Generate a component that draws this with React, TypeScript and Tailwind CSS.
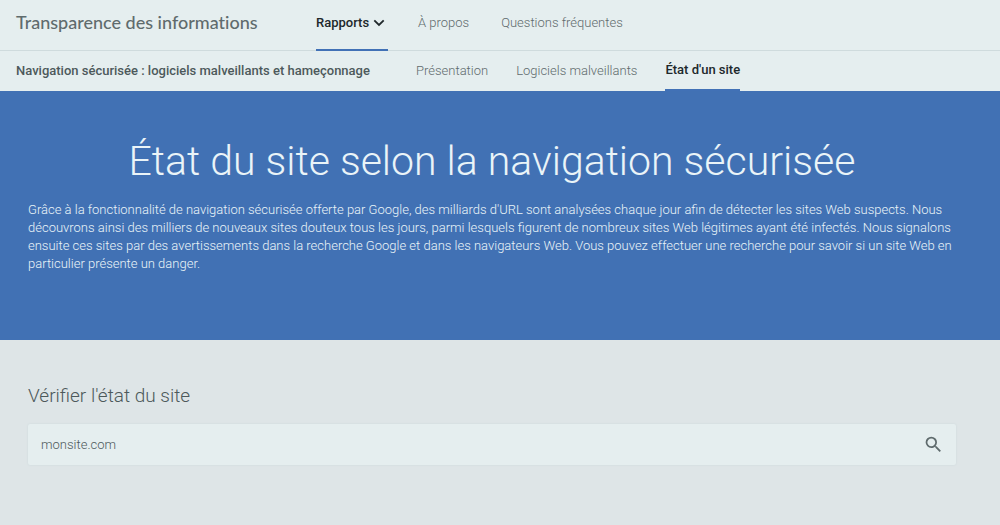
import React, { useState } from "react";
import { MdSearch } from "react-icons/md";

type NavLinkProps = {
  title: string;
  active?: boolean;
};

const NavLink: React.FC<NavLinkProps> = ({ title, active }) => {
  return (
    <a
      href="#"
      className={
        active
          ? "flex h-full items-center border-b-2 border-[#4171b6] font-medium text-[#20282b]"
          : "flex h-full items-center font-light text-[#5f6b6d]"
      }
    >
      {title}
    </a>
  );
};

const Header = () => {
  return (
    <header className="bg-[#e5eeef] text-[13px] whitespace-nowrap">
      <div className="flex h-[51px] border-b border-[#cfdbdd] pl-4">
        <a
          href="#"
          className="w-[300px] self-center pb-1.5 font-['Lato'] text-lg font-medium text-[#5f6b6d] [font-variant-ligatures:none]"
        >
          Transparence des informations
        </a>
        <nav className="-mb-px flex gap-[30px]">
          <button
            type="button"
            className="flex w-[72px] items-center gap-1 border-b-2 border-[#4171b6] pb-1 font-medium text-[#20282b]"
          >
            Rapports
            <svg width="12" height="8" viewBox="0 0 12 8" fill="none">
              <path d="M1.300 1.300L6 6l4.700-4.700" stroke="currentColor" strokeWidth="1.800" />
            </svg>
          </button>
          <div className="flex gap-8 pb-1.5">
            <NavLink title="À propos" />
            <NavLink title="Questions fréquentes" />
          </div>
        </nav>
      </div>
      <div className="flex h-10 pl-4">
        <h2 className="w-[400px] self-center font-medium text-[#4d595b]">
          Navigation sécurisée : logiciels malveillants et hameçonnage
        </h2>
        <nav className="flex gap-7">
          <NavLink title="Présentation" />
          <NavLink title="Logiciels malveillants" />
          <NavLink title="État d'un site" active />
        </nav>
      </div>
    </header>
  );
};

const Hero = () => {
  return (
    <section className="bg-[#4171b4] pt-11 pr-11 pb-[67px] pl-7 text-[#eaf4f8]">
      <h1 className="text-center text-[41px] leading-[52px] font-light">
        État du site selon la navigation sécurisée
      </h1>
      <p className="mt-3.5 text-[13px] leading-[18px] font-light">
        Grâce à la fonctionnalité de navigation sécurisée offerte par Google,
        des milliards d'URL sont analysées chaque jour afin de détecter les
        sites Web suspects. Nous découvrons ainsi des milliers de nouveaux sites
        douteux tous les jours, parmi lesquels figurent de nombreux sites Web
        légitimes ayant été infectés. Nous signalons ensuite ces sites par des
        avertissements dans la recherche Google et dans les navigateurs Web.
        Vous pouvez effectuer une recherche pour savoir si un site Web en
        particulier présente un danger.
      </p>
    </section>
  );
};

const SiteSearch = () => {
  const [site, setSite] = useState<string>("monsite.com");

  return (
    <form
      className="pt-11 pr-11 pb-15 pl-7"
      onSubmit={(e) => e.preventDefault()}
    >
      <label
        htmlFor="site"
        className="block text-[19px] leading-6 font-light text-[#4d595b]"
      >
        Vérifier l'état du site
      </label>
      <div className="mt-4 flex h-[41px] items-center rounded-xs bg-[#e5eeef] pr-3 pl-[13px] shadow-[0_0_2px_#cbd6d8]">
        <input
          id="site"
          type="text"
          className="h-full min-w-0 flex-1 bg-transparent text-[13px] font-light text-[#4d595b] outline-none"
          value={site}
          onChange={(e) => setSite(e.target.value)}
        />
        <button type="submit" aria-label="Rechercher" className="text-[#5f6b6d]">
          <MdSearch size={21} />
        </button>
      </div>
    </form>
  );
};

const App = () => {
  return (
    <div className="min-h-screen bg-[#dee5e7] font-['Roboto',sans-serif]">
      <Header />
      <main>
        <Hero />
        <SiteSearch />
      </main>
    </div>
  );
};

export default App;
